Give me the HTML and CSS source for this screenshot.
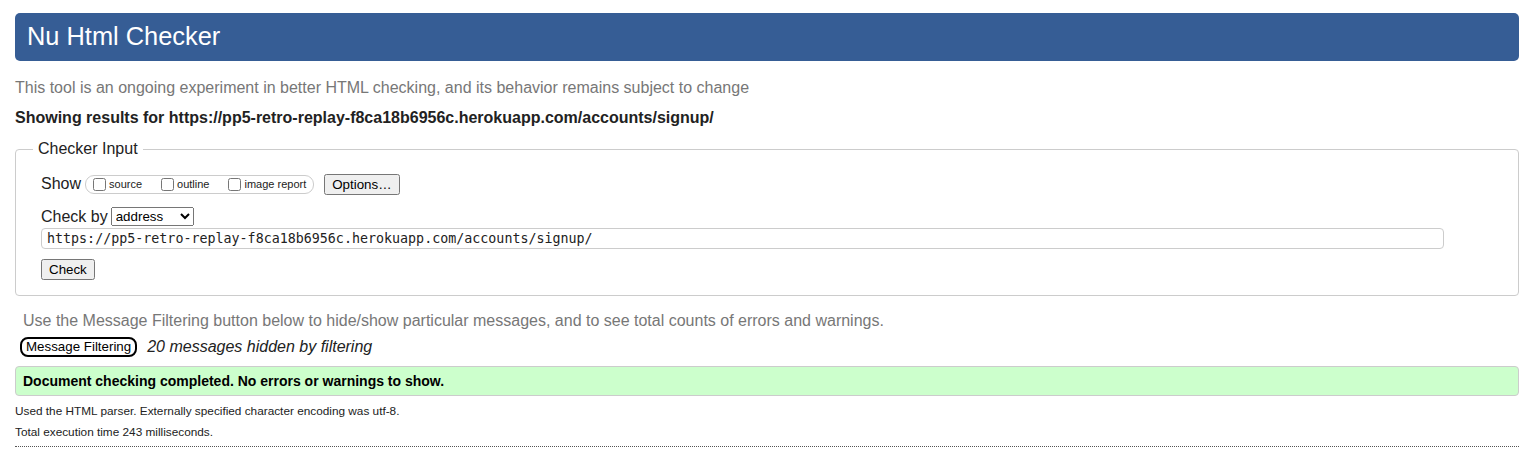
FILE: index.html
```html
<!DOCTYPE html>
<html lang="en">
<head>
<meta charset="utf-8">
<title>Nu Html Checker</title>
<link rel="stylesheet" href="styles.css">
</head>
<body>
<h1 class="title">Nu Html Checker</h1>
<p class="tagline">This tool is an ongoing experiment in better HTML checking, and its behavior remains subject to change</p>
<p class="showing">Showing results for https://pp5-retro-replay-f8ca18b6956c.herokuapp.com/accounts/signup/</p>
<fieldset class="checker">
  <legend class="checker-legend">Checker Input</legend>
  <div class="checker-inner">
    <div class="row row-show">
      <span class="row-label">Show</span>
      <fieldset class="pill">
        <label class="pill-item"><input type="checkbox" class="cb">source</label>
        <label class="pill-item"><input type="checkbox" class="cb">outline</label>
        <label class="pill-item"><input type="checkbox" class="cb">image report</label>
      </fieldset>
      <button type="button" class="btn btn-options">Options…</button>
    </div>
    <div class="row row-checkby">
      <label class="row-label" for="docselect">Check by</label>
      <select id="docselect" class="select">
        <option>address</option>
        <option>file upload</option>
        <option>text input</option>
      </select>
    </div>
    <div class="row row-url">
      <input class="url" type="url" value="https://pp5-retro-replay-f8ca18b6956c.herokuapp.com/accounts/signup/">
    </div>
    <div class="row row-submit">
      <button type="button" class="btn">Check</button>
    </div>
  </div>
</fieldset>
<p class="hint">Use the Message Filtering button below to hide/show particular messages, and to see total counts of errors and warnings.</p>
<div class="filter-row">
  <button type="button" class="filter-btn">Message Filtering</button>
  <em class="filter-note">20 messages hidden by filtering</em>
</div>
<p class="success">Document checking completed. No errors or warnings to show.</p>
<p class="meta">Used the HTML parser. Externally specified character encoding was utf-8.</p>
<p class="meta">Total execution time 243 milliseconds.</p>
<hr class="end-rule">
</body>
</html>
```
FILE: styles.css
```css
html {
  background: #fff;
}

body {
  margin: 0;
  padding: 13px 18px 0 15px;
  font-family: "Liberation Sans", Arial, sans-serif;
  font-size: 16px;
  color: #222;
}

.title {
  margin: 0;
  height: 48px;
  padding-left: 12px;
  background: #365d95;
  color: #fff;
  border-radius: 5px;
  font-weight: normal;
  font-size: 25.4px;
  line-height: 46px;
}

.tagline {
  margin: 18px 0 0;
  line-height: 18px;
  color: #777;
}

.showing {
  margin: 12px 0 0;
  line-height: 18px;
  font-weight: bold;
}

.checker {
  margin: 13px 0 0;
  padding: 0;
  min-width: 0;
  border: 1px solid #ccc;
  border-radius: 4px;
}

.checker-legend {
  margin-left: 17px;
  padding: 0 5px;
  line-height: 18px;
  font-size: 16px;
}

.checker-inner {
  padding: 15px 25px 15px;
}

.row {
  display: flex;
  align-items: center;
}

.row-show {
  height: 22px;
}

.row-label {
  line-height: 18px;
}

.pill {
  display: flex;
  align-items: center;
  gap: 15px;
  box-sizing: border-box;
  height: 19px;
  margin: 0 0 0 4px;
  padding: 0 7px 0 3px;
  min-width: 0;
  border: 1px solid #ccc;
  border-radius: 9px;
}

.pill-item {
  display: inline-flex;
  align-items: center;
  font-size: 11px;
  line-height: 13px;
}

.cb {
  margin: 0 3px 0 4px;
  width: 13px;
  height: 13px;
}

.btn {
  font-family: "Liberation Sans", Arial, sans-serif;
  font-size: 13.333px;
}

.btn-options {
  margin-left: 10px;
}

.row-checkby {
  height: 21px;
  margin-top: 11px;
}

.select {
  margin-left: 3px;
  width: 83px;
  height: 19px;
  font-family: "Liberation Sans", Arial, sans-serif;
  font-size: 13.333px;
}

.row-url {
  margin-top: 1px;
}

.url {
  box-sizing: border-box;
  width: 1403px;
  height: 21px;
  margin: 0;
  padding: 0 5px;
  border: 1px solid #ccc;
  border-radius: 4px;
  font-family: "DejaVu Sans Mono", monospace;
  font-size: 13.333px;
  color: #222;
}

.row-submit {
  margin-top: 10px;
}

.hint {
  margin: 16px 0 0 8px;
  line-height: 18px;
  color: #777;
}

.filter-row {
  display: flex;
  align-items: center;
  height: 20px;
  margin-top: 7px;
}

.filter-btn {
  box-sizing: border-box;
  height: 20px;
  margin-left: 5px;
  padding: 0 4px;
  border: 2px solid #000;
  border-radius: 8px;
  background: #fff;
  color: #000;
  font-family: "Liberation Sans", Arial, sans-serif;
  font-size: 13.333px;
  line-height: 16px;
}

.filter-note {
  margin-left: 10px;
  line-height: 18px;
}

.success {
  margin: 9px 0 0;
  padding: 0 7px;
  height: 30px;
  box-sizing: border-box;
  line-height: 28px;
  border: 1px solid #ccc;
  border-radius: 4px;
  background: #cfc;
  color: #000;
  font-size: 14px;
  font-weight: bold;
}

.meta {
  margin: 0;
  font-size: 11.8px;
  line-height: 21px;
}

.success + .meta {
  margin-top: 5px;
}

.end-rule {
  margin: 3px 0 0;
  height: 0;
  border: 0;
  border-top: 1px dotted #555;
}
```
